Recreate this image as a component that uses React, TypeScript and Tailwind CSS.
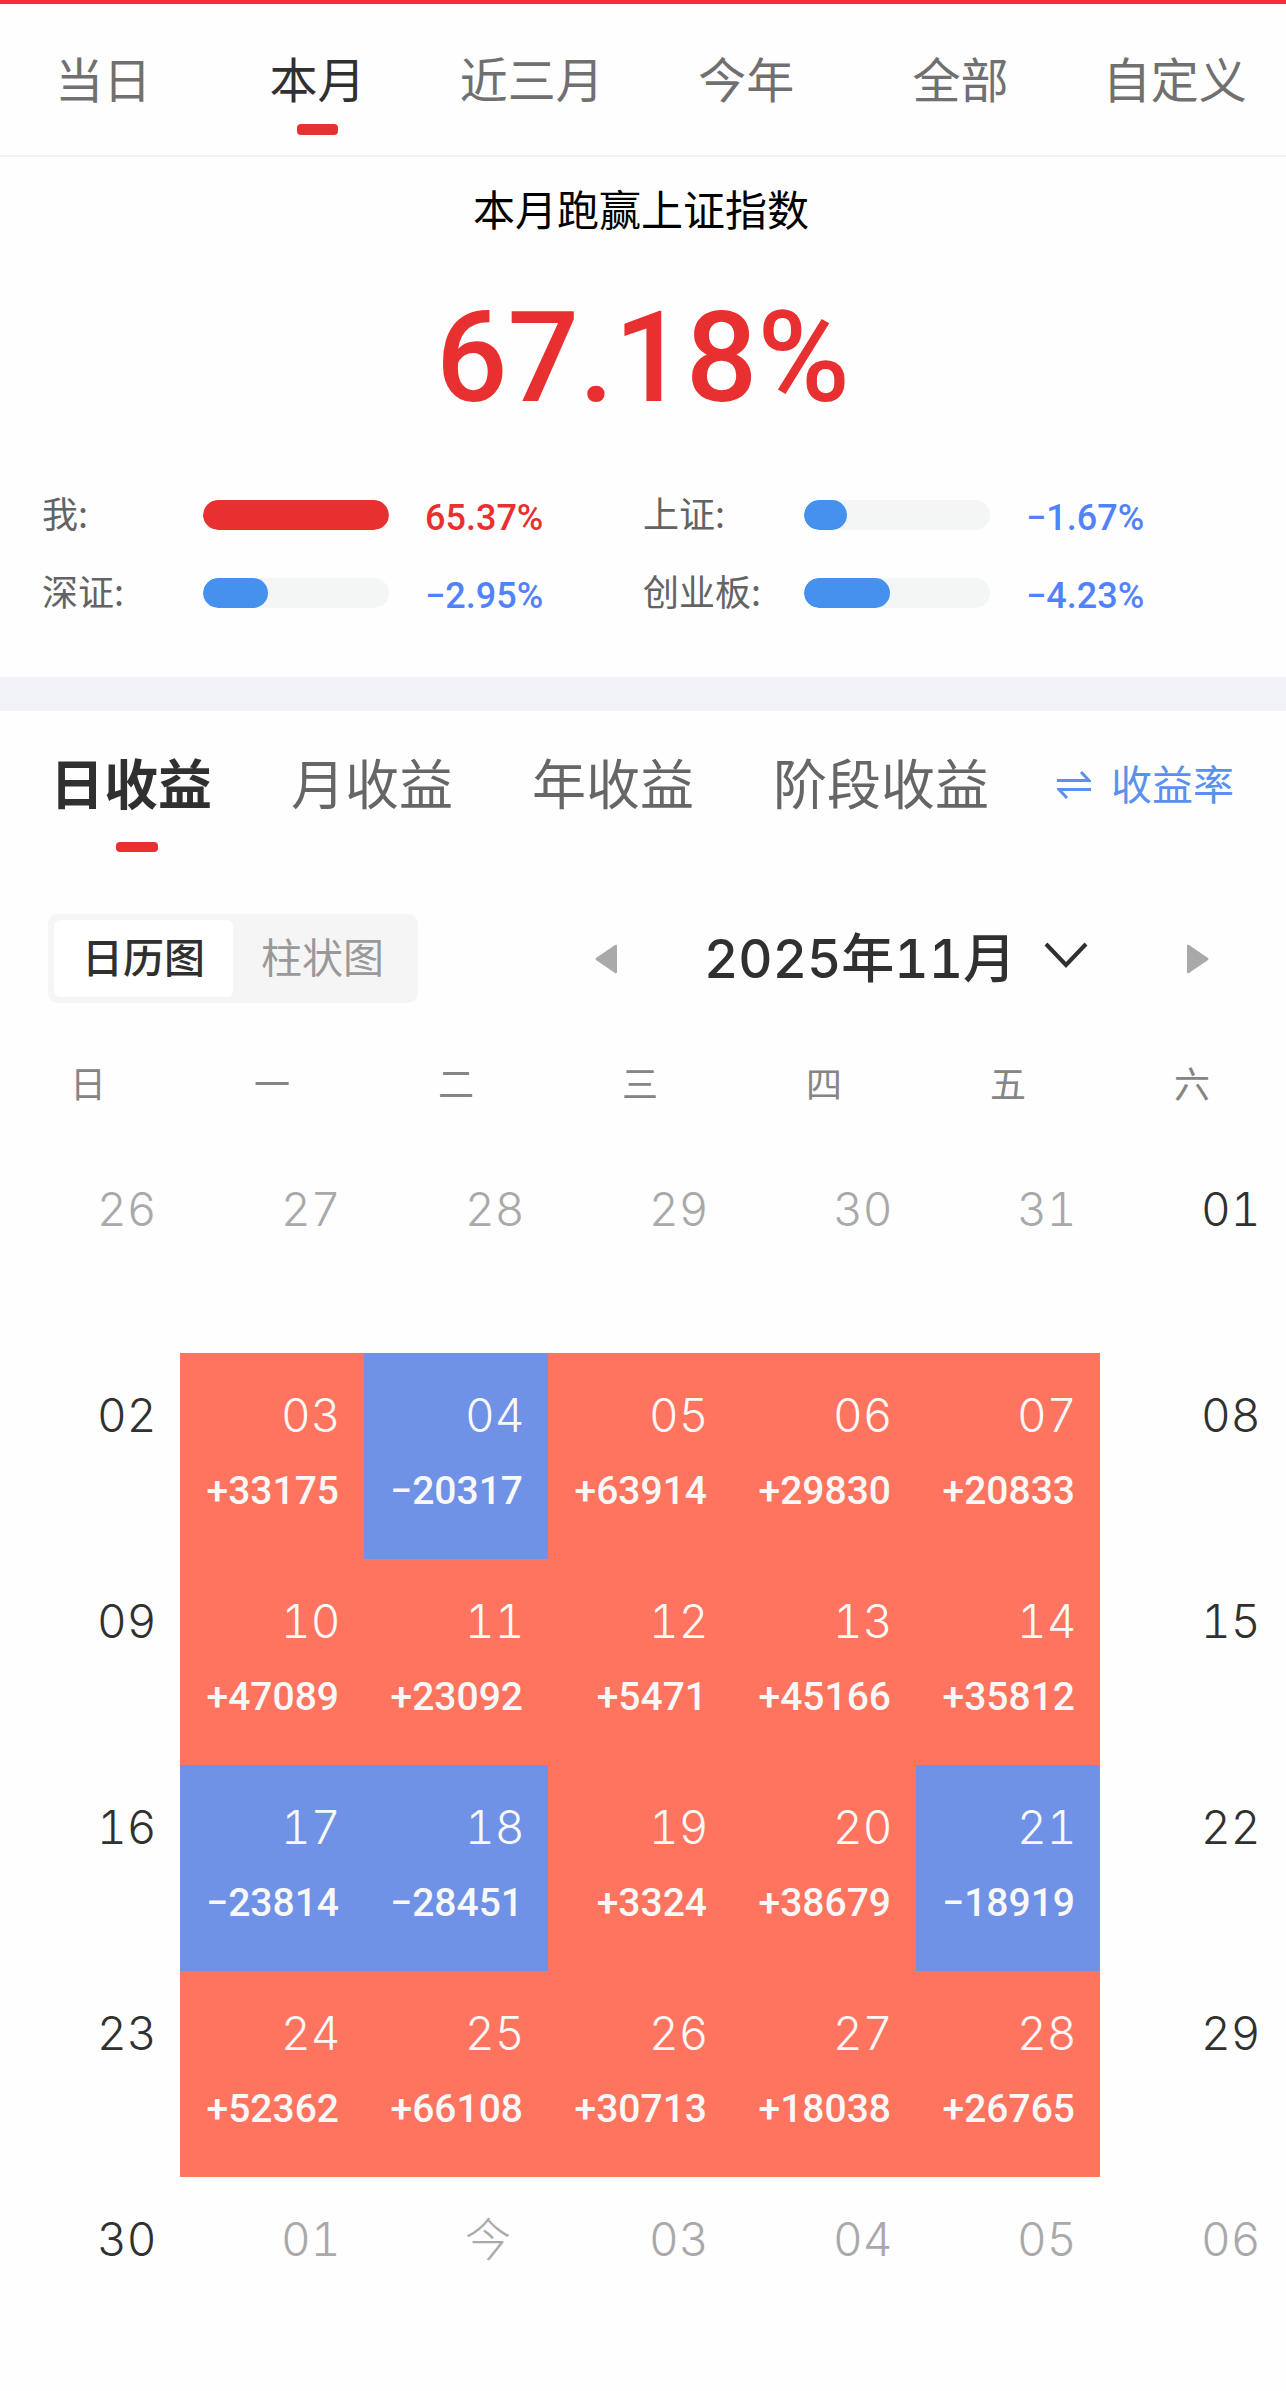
import { useState } from 'react';

import clsx from 'clsx';

const RANGES = ['当日', '本月', '近三月', '今年', '全部', '自定义'];
const PROFIT_TABS = ['日收益', '月收益', '年收益', '阶段收益'];
const CHART_TYPES = ['日历图', '柱状图'];
const WEEKDAYS = ['日', '一', '二', '三', '四', '五', '六'];

const COMPARISONS = [
  { label: '我', value: '65.37%', percent: 100, mine: true },
  { label: '上证', value: '−1.67%', percent: 23, mine: false },
  { label: '深证', value: '−2.95%', percent: 35, mine: false },
  { label: '创业板', value: '−4.23%', percent: 46, mine: false },
];

type Day = { day: string; amount?: string; outside?: boolean };

const WEEKS: Day[][] = [
  [
    { day: '26', outside: true },
    { day: '27', outside: true },
    { day: '28', outside: true },
    { day: '29', outside: true },
    { day: '30', outside: true },
    { day: '31', outside: true },
    { day: '01' },
  ],
  [
    { day: '02' },
    { day: '03', amount: '+33175' },
    { day: '04', amount: '−20317' },
    { day: '05', amount: '+63914' },
    { day: '06', amount: '+29830' },
    { day: '07', amount: '+20833' },
    { day: '08' },
  ],
  [
    { day: '09' },
    { day: '10', amount: '+47089' },
    { day: '11', amount: '+23092' },
    { day: '12', amount: '+5471' },
    { day: '13', amount: '+45166' },
    { day: '14', amount: '+35812' },
    { day: '15' },
  ],
  [
    { day: '16' },
    { day: '17', amount: '−23814' },
    { day: '18', amount: '−28451' },
    { day: '19', amount: '+3324' },
    { day: '20', amount: '+38679' },
    { day: '21', amount: '−18919' },
    { day: '22' },
  ],
  [
    { day: '23' },
    { day: '24', amount: '+52362' },
    { day: '25', amount: '+66108' },
    { day: '26', amount: '+30713' },
    { day: '27', amount: '+18038' },
    { day: '28', amount: '+26765' },
    { day: '29' },
  ],
  [
    { day: '30' },
    { day: '01', outside: true },
    { day: '今', outside: true },
    { day: '03', outside: true },
    { day: '04', outside: true },
    { day: '05', outside: true },
    { day: '06', outside: true },
  ],
];

function RangeTabs() {
  const [active, setActive] = useState('本月');

  return (
    <nav className="border-t-4 border-b-2 border-t-[#f52f3a] border-b-[#f2f2f2]">
      <div className="mr-1 -ml-1 grid grid-cols-6 pt-[37px] pb-5">
        {RANGES.map((range) => (
          <button
            key={range}
            onClick={() => setActive(range)}
            className={clsx(
              'flex cursor-pointer flex-col items-center gap-[11px] text-[48px] leading-[72px] whitespace-nowrap',
              active === range ? 'text-[#303030]' : 'text-[#707070]',
            )}
          >
            {range}
            <span
              className={clsx('h-[11px] w-[41px] rounded', active === range && 'bg-[#e93030]')}
            />
          </button>
        ))}
      </div>
    </nav>
  );
}

function Summary() {
  return (
    <section className="pt-[21px] pb-[45px]">
      <h1 className="pr-1 text-center text-[42px] leading-[60px] text-black">
        本月跑赢上证指数
      </h1>
      <p className="mt-14 text-center font-[Roboto,sans-serif] text-[126px] leading-[128px] font-medium text-[#e93030]">
        67.18%
      </p>

      <ul className="mt-[54px] grid grid-cols-2 px-[42px]">
        {COMPARISONS.map(({ label, value, percent, mine }) => (
          <li key={label} className="flex h-[78px] items-center">
            <span className="w-[161px] pb-1.5 text-[36px] text-[#636363]">{label}:</span>
            <div className="h-[30px] w-[186px] overflow-hidden rounded-full bg-[#f4f6f6]">
              <div
                className={clsx('h-full rounded-full', mine ? 'bg-[#e93030]' : 'bg-[#4690ee]')}
                style={{ width: `${percent}%` }}
              />
            </div>
            <span
              className={clsx(
                'mt-1.5 ml-9 font-[Roboto,sans-serif] text-[36px] font-medium',
                mine ? 'text-[#e93030]' : 'text-[#5282fb]',
              )}
            >
              {value}
            </span>
          </li>
        ))}
      </ul>
    </section>
  );
}

function ProfitTabs() {
  const [active, setActive] = useState('日收益');

  return (
    <div className="flex items-start justify-between pt-[35px] pr-[52px] pl-[50px]">
      <nav className="flex gap-[67px]">
        {PROFIT_TABS.map((tab) => (
          <button
            key={tab}
            onClick={() => setActive(tab)}
            className={clsx(
              'flex cursor-pointer flex-col gap-6 text-[54px] leading-[72px] whitespace-nowrap',
              active === tab ? 'font-bold text-[#303030]' : 'text-[#666666]',
            )}
          >
            <span className="pr-3">{tab}</span>
            <span
              className={clsx(
                'h-[10px] w-[42px] self-center rounded',
                active === tab && 'bg-[#e93030]',
              )}
            />
          </button>
        ))}
      </nav>

      <button className="flex cursor-pointer items-center gap-5 text-[41px] leading-[72px] whitespace-nowrap text-[#5a91ee]">
        <svg
          className="mt-1.5"
          width="34"
          height="28"
          viewBox="0 0 34 28"
          fill="none"
          stroke="currentColor"
          strokeWidth="3"
        >
          <path d="M0 9.500h32L24 1" />
          <path d="M34 18.500H2L10 27" />
        </svg>
        收益率
      </button>
    </div>
  );
}

function CalendarToolbar() {
  const [chart, setChart] = useState('日历图');

  return (
    <div className="mt-[62px] flex items-center pr-[77px] pl-12">
      <div className="flex rounded-[10px] bg-[#f5f5f5] p-1.5">
        {CHART_TYPES.map((type) => (
          <button
            key={type}
            onClick={() => setChart(type)}
            className={clsx(
              'h-[77px] w-[179px] cursor-pointer rounded-md pb-1.5 text-[41px]',
              chart === type ? 'bg-white font-medium text-[#303030]' : 'text-[#999999]',
            )}
          >
            {type}
          </button>
        ))}
      </div>

      <div className="ml-[177px] flex flex-1 items-center justify-between">
        <button aria-label="上个月" className="cursor-pointer text-[#a9a9a9]">
          <svg width="22" height="30" viewBox="0 0 22 30" fill="currentColor">
            <path d="M22 2v26q0 2-2 1L1 16q-1-1 0-2L20 1q2-1 2 1z" />
          </svg>
        </button>
        <button className="flex cursor-pointer items-center gap-7 pr-3 font-[Inter,'Noto_Sans_CJK_SC',sans-serif] text-[53px] leading-[72px] font-medium whitespace-nowrap text-[#303030] tabular-nums">
          2025年11月
          <svg
            className="mb-2"
            width="44"
            height="28"
            viewBox="0 0 44 28"
            fill="none"
            stroke="currentColor"
            strokeWidth="4"
          >
            <path d="M2 3l20 21L42 3" />
          </svg>
        </button>
        <button aria-label="下个月" className="cursor-pointer text-[#a9a9a9]">
          <svg width="22" height="30" viewBox="0 0 22 30" fill="currentColor">
            <path d="M0 2v26q0 2 2 1l19-13q1-1 0-2L2 1Q0 0 0 2z" />
          </svg>
        </button>
      </div>
    </div>
  );
}

function DayCell({ day, amount, outside }: Day) {
  return (
    <td
      className={clsx(
        'h-[206px] p-0 align-top',
        amount?.startsWith('+') && 'bg-[#ff745f]',
        amount?.startsWith('−') && 'bg-[#6f92e6]',
      )}
    >
      <div className="flex flex-col items-end gap-6 pt-[34px] pr-[25px]">
        <span
          className={clsx(
            "w-[58px] font-[Inter,'Noto_Sans_CJK_SC',sans-serif] text-[46px] leading-[56px] font-light tabular-nums",
            amount ? 'text-[#f8f8f8]' : outside ? 'text-[#a9a9a9]' : 'text-[#303030]',
          )}
        >
          {day}
        </span>
        {amount && (
          <span className="font-[Roboto,sans-serif] text-[39px] leading-[48px] font-medium text-[#f8f8f8]">
            {amount}
          </span>
        )}
      </div>
    </td>
  );
}

function ProfitCalendar() {
  return (
    <div className="mt-[43px] mr-0.5 -ml-1">
      <table className="w-full table-fixed border-collapse">
        <thead>
          <tr>
            {WEEKDAYS.map((weekday) => (
              <th
                key={weekday}
                className="h-[101px] p-0 text-center align-top text-[36px] leading-[72px] font-normal text-[#858585]"
              >
                {weekday}
              </th>
            ))}
          </tr>
        </thead>
        <tbody>
          {WEEKS.map((week, i) => (
            <tr key={i}>
              {week.map((item) => (
                <DayCell key={item.day} {...item} />
              ))}
            </tr>
          ))}
        </tbody>
      </table>
    </div>
  );
}

export default function App() {
  return (
    <main
      lang="zh-CN"
      className="min-h-screen overflow-x-hidden bg-[#fefefe] font-['Noto_Sans_CJK_SC',sans-serif]"
    >
      <RangeTabs />
      <Summary />
      <div className="h-[34px] bg-[#f2f3f8]" />
      <section>
        <ProfitTabs />
        <CalendarToolbar />
        <ProfitCalendar />
      </section>
    </main>
  );
}
